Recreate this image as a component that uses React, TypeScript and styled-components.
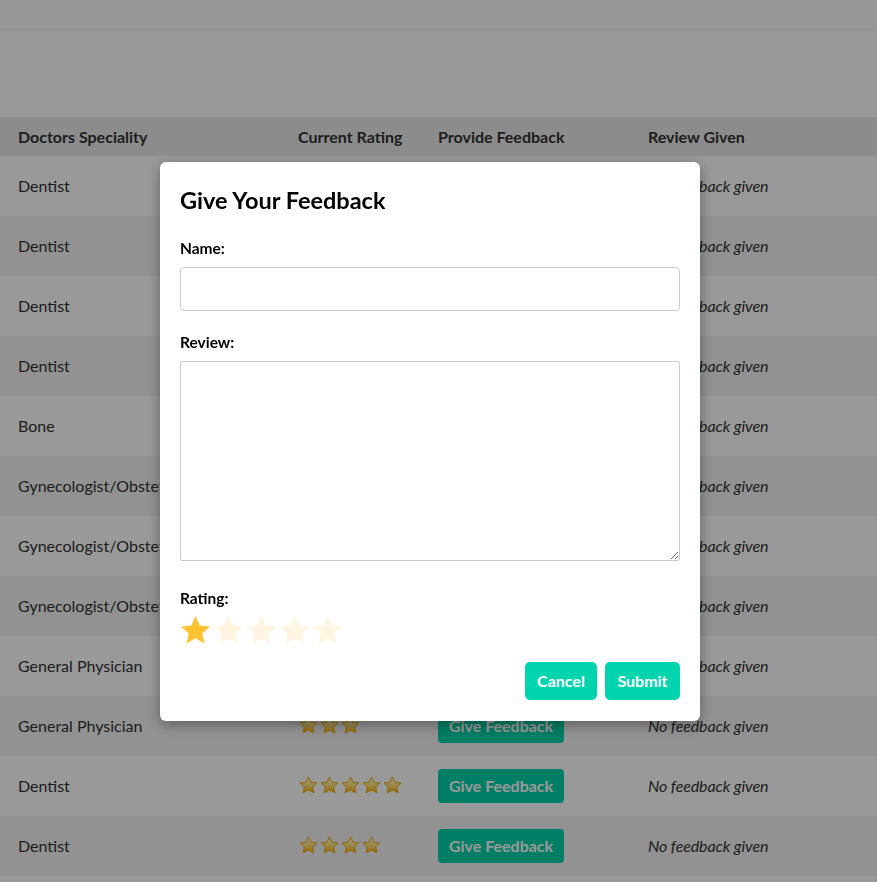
import React from "react";
import styled, { createGlobalStyle } from "styled-components";

const Global = createGlobalStyle`
  html, body { margin: 0; padding: 0; }
  body { font-family: "Lato", "Noto Sans", sans-serif; background: #fff; color: #333; }
  * { box-sizing: border-box; }
`;

const TopBar = styled.div`
  height: 31px;
  background: #fcfcfc;
  border-bottom: 1px solid #eeeeee;
`;

const Spacer = styled.div`
  height: 86px;
`;

const Table = styled.div`
  display: flex;
  flex-direction: column;
  width: 100%;
`;

const HeadRow = styled.div`
  display: grid;
  grid-template-columns: 280px 140px 210px 1fr;
  height: 39px;
  align-items: center;
  padding-left: 18px;
  padding-bottom: 1px;
  background: #e9e9e9;
  font-weight: 700;
  font-size: 16px;
  color: #333;
`;

const Row = styled.div<{ $alt: boolean }>`
  display: grid;
  grid-template-columns: 280px 140px 210px 1fr;
  height: 60px;
  align-items: center;
  padding-left: 18px;
  padding-bottom: 1px;
  background: ${(p) => (p.$alt ? "#f3f3f3" : "#ffffff")};
  font-size: 16px;
  color: #333;
`;

const Cell = styled.div`
  white-space: nowrap;
  overflow: hidden;
`;

const Italic = styled.div`
  font-style: italic;
  white-space: nowrap;
  letter-spacing: -0.1px;
`;

const Stars = styled.div`
  display: flex;
  gap: 0;
`;

const FeedbackBtn = styled.button`
  width: 126px;
  height: 34px;
  border: none;
  border-radius: 4px;
  background: #00d4aa;
  color: #fff;
  font-family: inherit;
  font-weight: 700;
  font-size: 16px;
  padding: 0;
`;

const Overlay = styled.div`
  position: fixed;
  inset: 0;
  background: rgba(0, 0, 0, 0.4);
  display: flex;
  align-items: center;
  justify-content: center;
  padding-right: 17px;
`;

const Modal = styled.div`
  width: 540px;
  background: #fff;
  border-radius: 6px;
  padding: 20px 20px 21px;
  box-shadow: 0 4px 14px rgba(0, 0, 0, 0.35);
  display: flex;
  flex-direction: column;
`;

const Title = styled.h2`
  margin: 4px 0 0;
  font-size: 23.5px;
  font-weight: 700;
  color: #000;
  line-height: 28px;
`;

const Label = styled.label<{ $top: number }>`
  display: block;
  margin-top: ${(p) => p.$top}px;
  font-size: 15.5px;
  font-weight: 700;
  color: #000;
  line-height: 20px;
`;

const Input = styled.input`
  display: block;
  margin-top: 9px;
  width: 100%;
  height: 44px;
  border: 1px solid #cccccc;
  border-radius: 4px;
  font-family: inherit;
  font-size: 16px;
`;

const TextArea = styled.textarea`
  display: block;
  margin-top: 9px;
  width: 100%;
  height: 200px;
  border: 1px solid #cccccc;
  border-radius: 2px;
  font-family: inherit;
  font-size: 16px;
  resize: vertical;
`;

const RatingRow = styled.div`
  display: flex;
  gap: 0;
  margin-top: 6px;
  margin-left: -1px;
`;

const Actions = styled.div`
  display: flex;
  justify-content: flex-end;
  gap: 8px;
  margin-top: 15px;
`;

const ModalBtn = styled.button<{ $w: number }>`
  width: ${(p) => p.$w}px;
  height: 38px;
  border: none;
  border-radius: 5px;
  background: #00d4ae;
  color: #fff;
  font-family: inherit;
  font-weight: 700;
  font-size: 16px;
  padding: 0;
`;

const STAR = "M12 1.5l3.1 6.9 7.4.7-5.6 5 1.7 7.4L12 17.6l-6.6 3.9 1.7-7.4-5.6-5 7.4-.7z";
const FAT_STAR = "M12 2.2l2.9 6.1 6.7.8-4.9 4.6 1.3 6.6L12 17l-6 3.3 1.3-6.6-4.9-4.6 6.7-.8z";

const GoldStar: React.FC<{ id: string }> = ({ id }) => (
  <svg width="21" height="21" viewBox="0 0 24 24">
    <defs>
      <linearGradient id={id} x1="0" y1="0" x2="0" y2="1">
        <stop offset="0%" stopColor="#fffdf0" />
        <stop offset="45%" stopColor="#ffeb90" />
        <stop offset="100%" stopColor="#ffb300" />
      </linearGradient>
    </defs>
    <path d={FAT_STAR} fill={`url(#${id})`} stroke="#f0a500" strokeWidth="1.1" strokeLinejoin="round" />
  </svg>
);

const FlatStar: React.FC<{ on: boolean }> = ({ on }) => (
  <svg width="33" height="33" viewBox="0 0 24 24">
    <path d={STAR} fill={on ? "#ffc233" : "#fff5e0"} />
  </svg>
);

const rows: { name: string; rating: number }[] = [
  { name: "Dentist", rating: 4 },
  { name: "Dentist", rating: 3 },
  { name: "Dentist", rating: 5 },
  { name: "Dentist", rating: 4 },
  { name: "Bone", rating: 3 },
  { name: "Gynecologist/Obstetrician", rating: 4 },
  { name: "Gynecologist/Obstetrician", rating: 5 },
  { name: "Gynecologist/Obstetrician", rating: 3 },
  { name: "General Physician", rating: 4 },
  { name: "General Physician", rating: 3 },
  { name: "Dentist", rating: 5 },
  { name: "Dentist", rating: 4 },
  { name: "Dentist", rating: 3 },
];

export default function App() {
  return (
    <>
      <Global />
      <TopBar />
      <Spacer />
      <Table>
        <HeadRow>
          <Cell>Doctors Speciality</Cell>
          <Cell>Current Rating</Cell>
          <Cell>Provide Feedback</Cell>
          <Cell>Review Given</Cell>
        </HeadRow>
        {rows.map((r, i) => (
          <Row key={i} $alt={i % 2 === 1}>
            <Cell>{r.name}</Cell>
            <Stars>
              {Array.from({ length: r.rating }).map((_, j) => (
                <GoldStar key={j} id={`g${i}-${j}`} />
              ))}
            </Stars>
            <div>
              <FeedbackBtn>Give Feedback</FeedbackBtn>
            </div>
            <Italic>No feedback given</Italic>
          </Row>
        ))}
      </Table>
      <Overlay>
        <Modal>
          <Title>Give Your Feedback</Title>
          <Label $top={24}>Name:</Label>
          <Input type="text" />
          <Label $top={21}>Review:</Label>
          <TextArea />
          <Label $top={27}>Rating:</Label>
          <RatingRow>
            {[0, 1, 2, 3, 4].map((k) => (
              <FlatStar key={k} on={k === 0} />
            ))}
          </RatingRow>
          <Actions>
            <ModalBtn $w={72}>Cancel</ModalBtn>
            <ModalBtn $w={75}>Submit</ModalBtn>
          </Actions>
        </Modal>
      </Overlay>
    </>
  );
}
